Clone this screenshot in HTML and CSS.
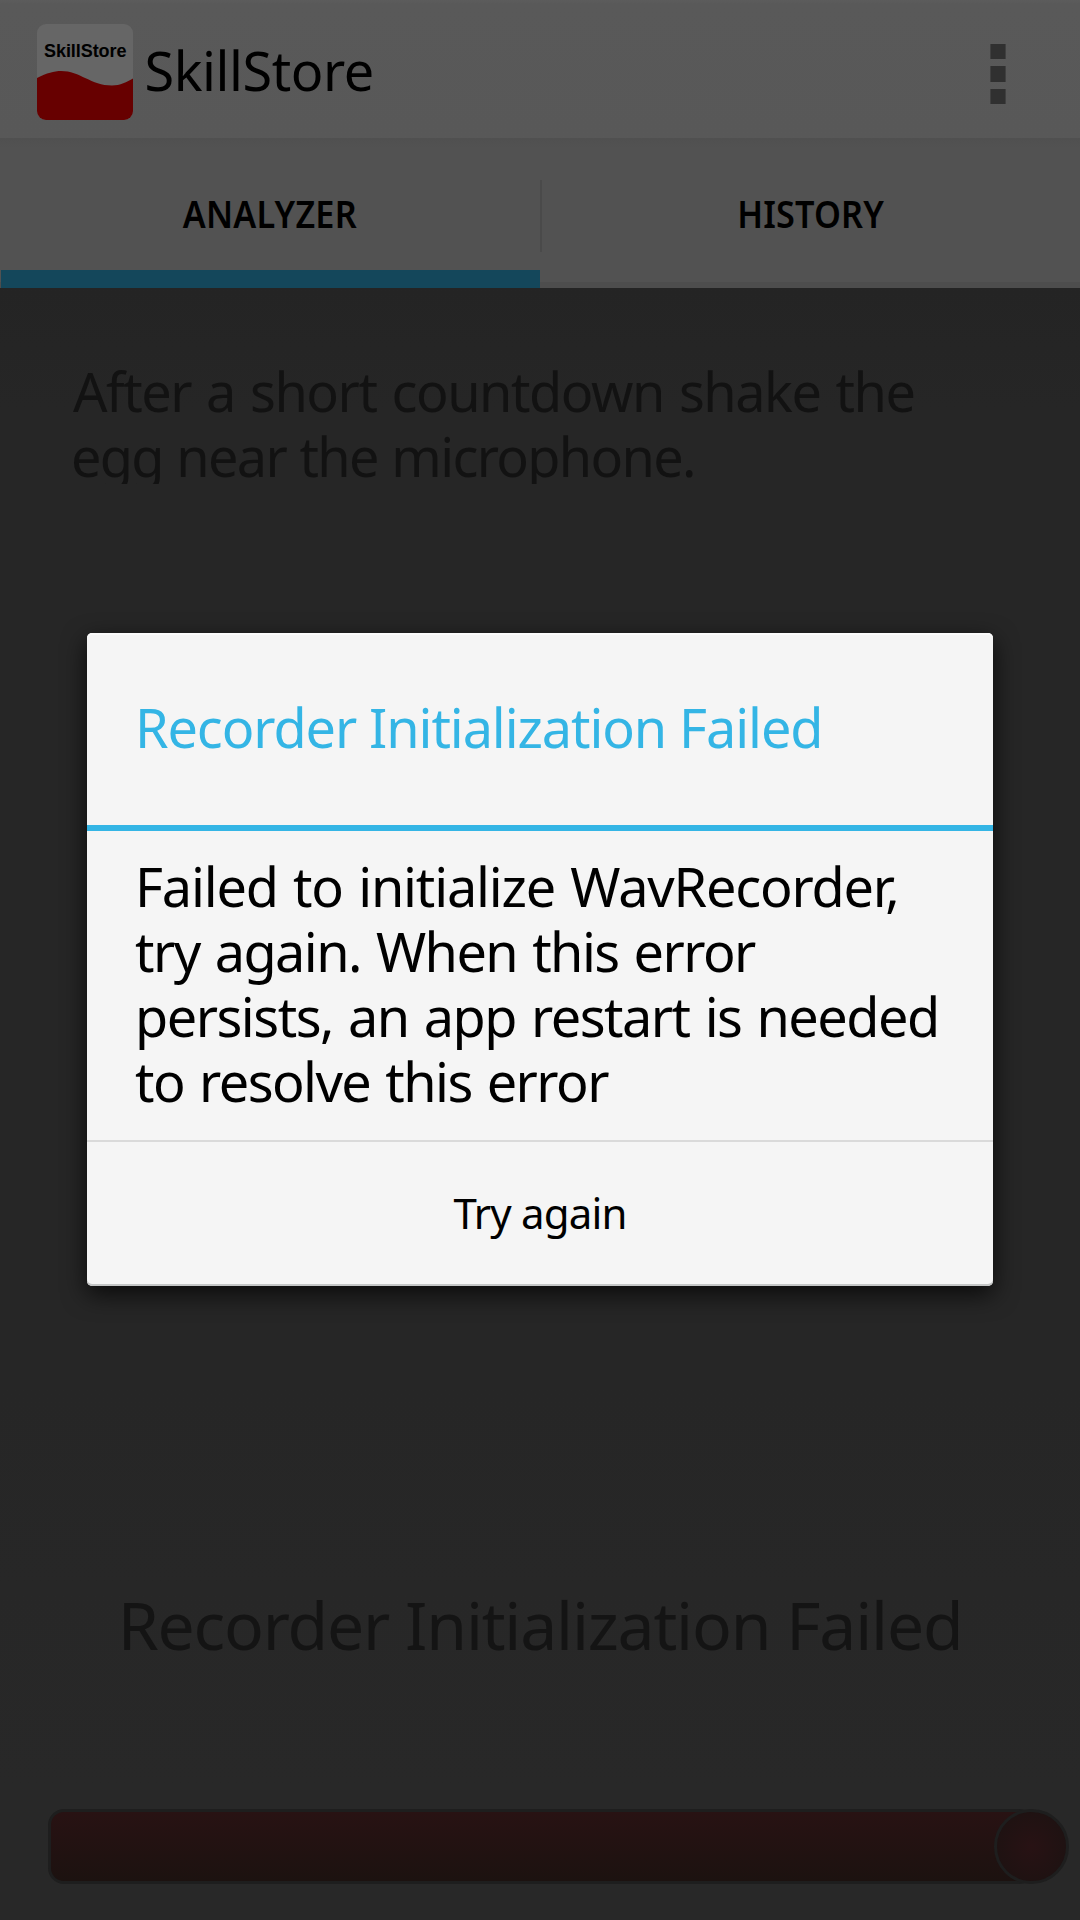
FILE: index.html
```html
<!DOCTYPE html>
<html lang="en">
<head>
<meta charset="utf-8">
<title>SkillStore</title>
<link rel="stylesheet" href="styles.css">
</head>
<body>
<div class="screen">
  <header class="action-bar">
    <svg class="logo" width="96" height="96" viewBox="0 0 96 96">
      <defs>
        <clipPath id="logo-clip"><rect width="96" height="96" rx="9"/></clipPath>
      </defs>
      <g clip-path="url(#logo-clip)">
        <rect width="96" height="96" fill="#666"/>
        <path d="M0 54C10 49 17 47 24 47C43 47 54 61.500 75 61.500C83 61.500 90 58 96 54.500V96H0Z" fill="#670000"/>
      </g>
      <text class="logo-text" x="7" y="33" textLength="82.500">SkillStore</text>
    </svg>
    <h1 class="app-name">SkillStore</h1>
    <div class="overflow"><i></i><i></i><i></i></div>
  </header>
  <nav class="tabs">
    <div class="tab tab-active"><span class="tab-label tab-analyzer">ANALYZER</span></div>
    <div class="tab"><span class="tab-label tab-history">HISTORY</span></div>
  </nav>
  <main class="content">
    <p class="hint">
      <span class="hint-first">After a short countdown shake the</span>
      <span class="hint-second">egg near the microphone.</span>
    </p>
    <p class="status">Recorder Initialization Failed</p>
    <div class="slider"><div class="track"></div><div class="thumb"></div></div>
  </main>
</div>
<section class="dialog" role="dialog">
  <h2 class="dialog-title">Recorder Initialization Failed</h2>
  <p class="message">
    <span class="line-1">Failed to initialize WavRecorder,</span>
    <span class="line-2">try again. When this error</span>
    <span class="line-3">persists, an app restart is needed</span>
    <span class="line-4">to resolve this error</span>
  </p>
  <button class="retry">Try again</button>
</section>
</body>
</html>
```
FILE: styles.css
```css
* { box-sizing: border-box; }
html, body { margin: 0; }
body {
  position: relative;
  width: 1080px;
  height: 1920px;
  overflow: hidden;
  background: #262626;
  font-family: "Noto Sans", "Open Sans", sans-serif;
  color: #000;
}
h1, h2, p { margin: 0; font-weight: 400; }
.screen { display: flex; flex-direction: column; height: 100%; }

.action-bar {
  display: flex;
  align-items: center;
  height: 138px;
  padding: 0 74px 0 37px;
  background: linear-gradient(#5c5c5c, #595959 4px, #585858);
}
.logo { display: block; margin-top: 6px; }
.logo-text { font: bold 18px "Liberation Sans", Arial, sans-serif; }
.app-name {
  margin: 2px 0 0 11.5px;
  font-size: 54px;
  line-height: 65px;
  letter-spacing: -.45px;
}
.overflow {
  display: flex;
  flex-direction: column;
  gap: 7px;
  margin: 10px 0 0 auto;
}
.overflow i { width: 16px; height: 15.500px; background: #303030; border-right: 1px solid #404040; border-left: 1px solid #404040; }

.tabs {
  display: flex;
  height: 150px;
  background: linear-gradient(#505050, #525252 10px, #525252 144px, #4d4d4d 144px);
}
.tab {
  display: flex;
  align-items: center;
  justify-content: center;
  width: 540px;
}
.tab + .tab::before {
  content: "";
  width: 2px;
  height: 72px;
  margin: 6px auto 0 0;
  background: #4a4a4a;
}
.tab + .tab .tab-label { margin-right: auto; }
.tab-active {
  background: linear-gradient(#14475b, #14475b) 1px 100% / 539px 18px no-repeat;
}
.tab-label {
  font-size: 38px;
  font-weight: 600;
  line-height: 48px;
  transform: scaleX(.9);
}
.tab-analyzer { letter-spacing: .3px; }
.tab-history { letter-spacing: .2px; }

.content {
  display: flex;
  flex: 1;
  flex-direction: column;
  background: linear-gradient(#242424, #262626 120px, #262626 1100px, #282828 1500px);
  color: #121212;
}
.hint {
  height: 125px;
  margin: 71px 73px 0;
  overflow: hidden;
  font-size: 54px;
  line-height: 65px;
}
.hint span, .message span { display: block; white-space: nowrap; }
.hint-first { letter-spacing: -1.46px; word-spacing: 2.5px; }
.hint-second { letter-spacing: -1.65px; word-spacing: 1px; margin-left: -2px; }
.status {
  margin: 1100px 0 0;
  text-align: center;
  font-size: 66px;
  line-height: 80px;
  letter-spacing: -1.18px;
  color: #141414;
}
.slider { display: flex; height: 75px; margin: 145px 11px 0 48px; }
.track {
  width: 987px;
  border: 3px solid #1e1e1e;
  border-radius: 16px;
  background: linear-gradient(#281213, #1c1210);
}
.thumb {
  width: 75px;
  margin-left: -41px;
  border: 3px solid #1e1e1e;
  border-radius: 50%;
  background: radial-gradient(circle, #281214, #1f1212 70%);
}

.dialog {
  position: absolute;
  top: 633px;
  left: 87px;
  width: 906px;
  height: 653px;
  border-radius: 5px;
  background: #f5f5f5;
  box-shadow: 0 8px 24px rgba(0, 0, 0, .75), inset 0 2px #fbfbfb, inset 0 -2px #c4c6c6;
}
.dialog-title {
  height: 198px;
  padding: 62px 48px 0;
  border-bottom: 6px solid #34b5e5;
  font-size: 54px;
  line-height: 65px;
  letter-spacing: -1.09px;
  color: #34b5e5;
  white-space: nowrap;
}
.message {
  height: 309px;
  padding: 23px 48px 0;
  font-size: 54px;
  line-height: 65px;
  word-spacing: 2.5px;
}
.line-1 { letter-spacing: -1.19px; }
.line-2 { letter-spacing: -1.55px; }
.line-3 { letter-spacing: -1.5px; }
.line-4 { letter-spacing: -1.55px; }
.retry {
  display: block;
  width: 100%;
  height: 146px;
  padding: 0 0 4px;
  border: 0;
  border-top: 2px solid #dadada;
  background: none;
  color: #000;
  font: 42px "Noto Sans", "Open Sans", sans-serif;
  letter-spacing: -.85px;
}
```
